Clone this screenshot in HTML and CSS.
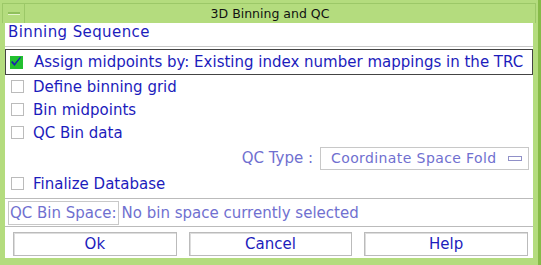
FILE: index.html
```html
<!DOCTYPE html>
<html>
<head>
    <title>3D Binning and QC</title>
    <meta charset="UTF-8">
    <link rel="stylesheet" href="styles.css">
</head>
<body>
    <div class="window">
        <div class="titlebar">
            <div class="menu-btn"><span></span></div>
            <div class="title">3D Binning and QC</div>
        </div>
        <div class="content">
            <div class="heading">Binning Sequence</div>
            <div class="step active">
                <span class="box checked">
                    <svg width="12" height="12" viewBox="0 0 12 12"><path d="M1 6 L4.5 10 L11 1.5 L10 1 L4.5 7.5 L2.5 5 Z" fill="#1a1ab4"/></svg>
                </span>
                Assign midpoints by: Existing index number mappings in the TRC
            </div>
            <div class="step"><span class="box"></span>Define binning grid</div>
            <div class="step"><span class="box"></span>Bin midpoints</div>
            <div class="step"><span class="box"></span>QC Bin data</div>
            <div class="qc-type">
                <span class="qc-label">QC Type :</span>
                <div class="select">Coordinate Space Fold<span class="select-mark"></span></div>
            </div>
            <div class="step"><span class="box"></span>Finalize Database</div>
            <div class="space-row">
                <span class="space-btn">QC Bin Space:</span>
                <span class="space-text">No bin space currently selected</span>
            </div>
            <div class="buttons">
                <button>Ok</button>
                <button>Cancel</button>
                <button>Help</button>
            </div>
        </div>
    </div>
</body>
</html>
```

FILE: styles.css
```css
body {
    margin: 0;
    font-family: 'DejaVu Sans', sans-serif;
    background-color: #b4dc7e;
}
.window {
    width: 541px;
    height: 265px;
    box-sizing: border-box;
    display: flex;
    flex-direction: column;
    background-color: #b4dc7e;
    border-right: 3px solid #86bb48;
}
.titlebar {
    height: 19px;
    margin: 3px 2px 0 2px;
    display: flex;
    align-items: center;
    border: 1px solid #9cc868;
    border-bottom: none;
}
.menu-btn {
    width: 21px;
    height: 19px;
    border-right: 1px solid #9cc868;
    display: flex;
    align-items: center;
    justify-content: center;
}
.menu-btn span {
    width: 12px;
    height: 2px;
    background-color: #8fbf5c;
    border-bottom: 1px solid #e4f4cc;
}
.title {
    flex: 1;
    text-align: center;
    font-size: 12.5px;
    color: #111;
    padding-right: 20px;
}
.content {
    flex: 1;
    background-color: #fff;
    margin: 0 5px 7px 5px;
    display: flex;
    flex-direction: column;
    color: #1c1cbc;
    font-size: 15px;
}
.heading {
    height: 23px;
    line-height: 18px;
    padding-left: 3px;
    border-bottom: 1px solid #c8c8c8;
    letter-spacing: 0.4px;
}
.step {
    height: 23px;
    flex-shrink: 0;
    display: flex;
    align-items: center;
    padding-left: 6px;
    gap: 9px;
}
.step.active {
    height: 24px;
    margin-top: 2px;
    border: 1px solid #444;
    padding-left: 4px;
    gap: 11px;
}
.box {
    width: 13px;
    height: 13px;
    border: 1px solid #bbb;
    box-sizing: border-box;
    display: flex;
}
.box.checked {
    border: none;
    background-color: #22c030;
}
.qc-type {
    height: 28px;
    flex-shrink: 0;
    display: flex;
    align-items: center;
    justify-content: flex-end;
    padding-right: 4px;
    gap: 7px;
    color: #7070d0;
}
.select {
    width: 209px;
    height: 23px;
    box-sizing: border-box;
    border: 1px solid #c8c8c8;
    display: flex;
    align-items: center;
    justify-content: space-between;
    padding: 0 6px 0 10px;
    font-size: 14px;
    letter-spacing: 0.4px;
}
.select-mark {
    width: 12px;
    height: 3px;
    flex-shrink: 0;
    border: 1px solid #9090c8;
}
.space-row {
    margin-top: 3px;
    height: 27px;
    flex-shrink: 0;
    border-top: 1px solid #bbb;
    border-bottom: 1px solid #bbb;
    display: flex;
    align-items: center;
    padding-left: 3px;
    gap: 3px;
    color: #7070d0;
}
.space-btn {
    border: 1px solid #c8c8c8;
    padding: 2px 1px;
}
.buttons {
    flex: 1;
    display: flex;
    align-items: center;
    padding: 3px 5px 0 8px;
    gap: 12px;
}
button {
    flex: 1;
    height: 24px;
    background-color: #fff;
    border: 1px solid #bbb;
    box-shadow: inset 1px 1px 0 #ddd;
    font-family: 'DejaVu Sans', sans-serif;
    font-size: 15px;
    color: #1c1cbc;
}
```
